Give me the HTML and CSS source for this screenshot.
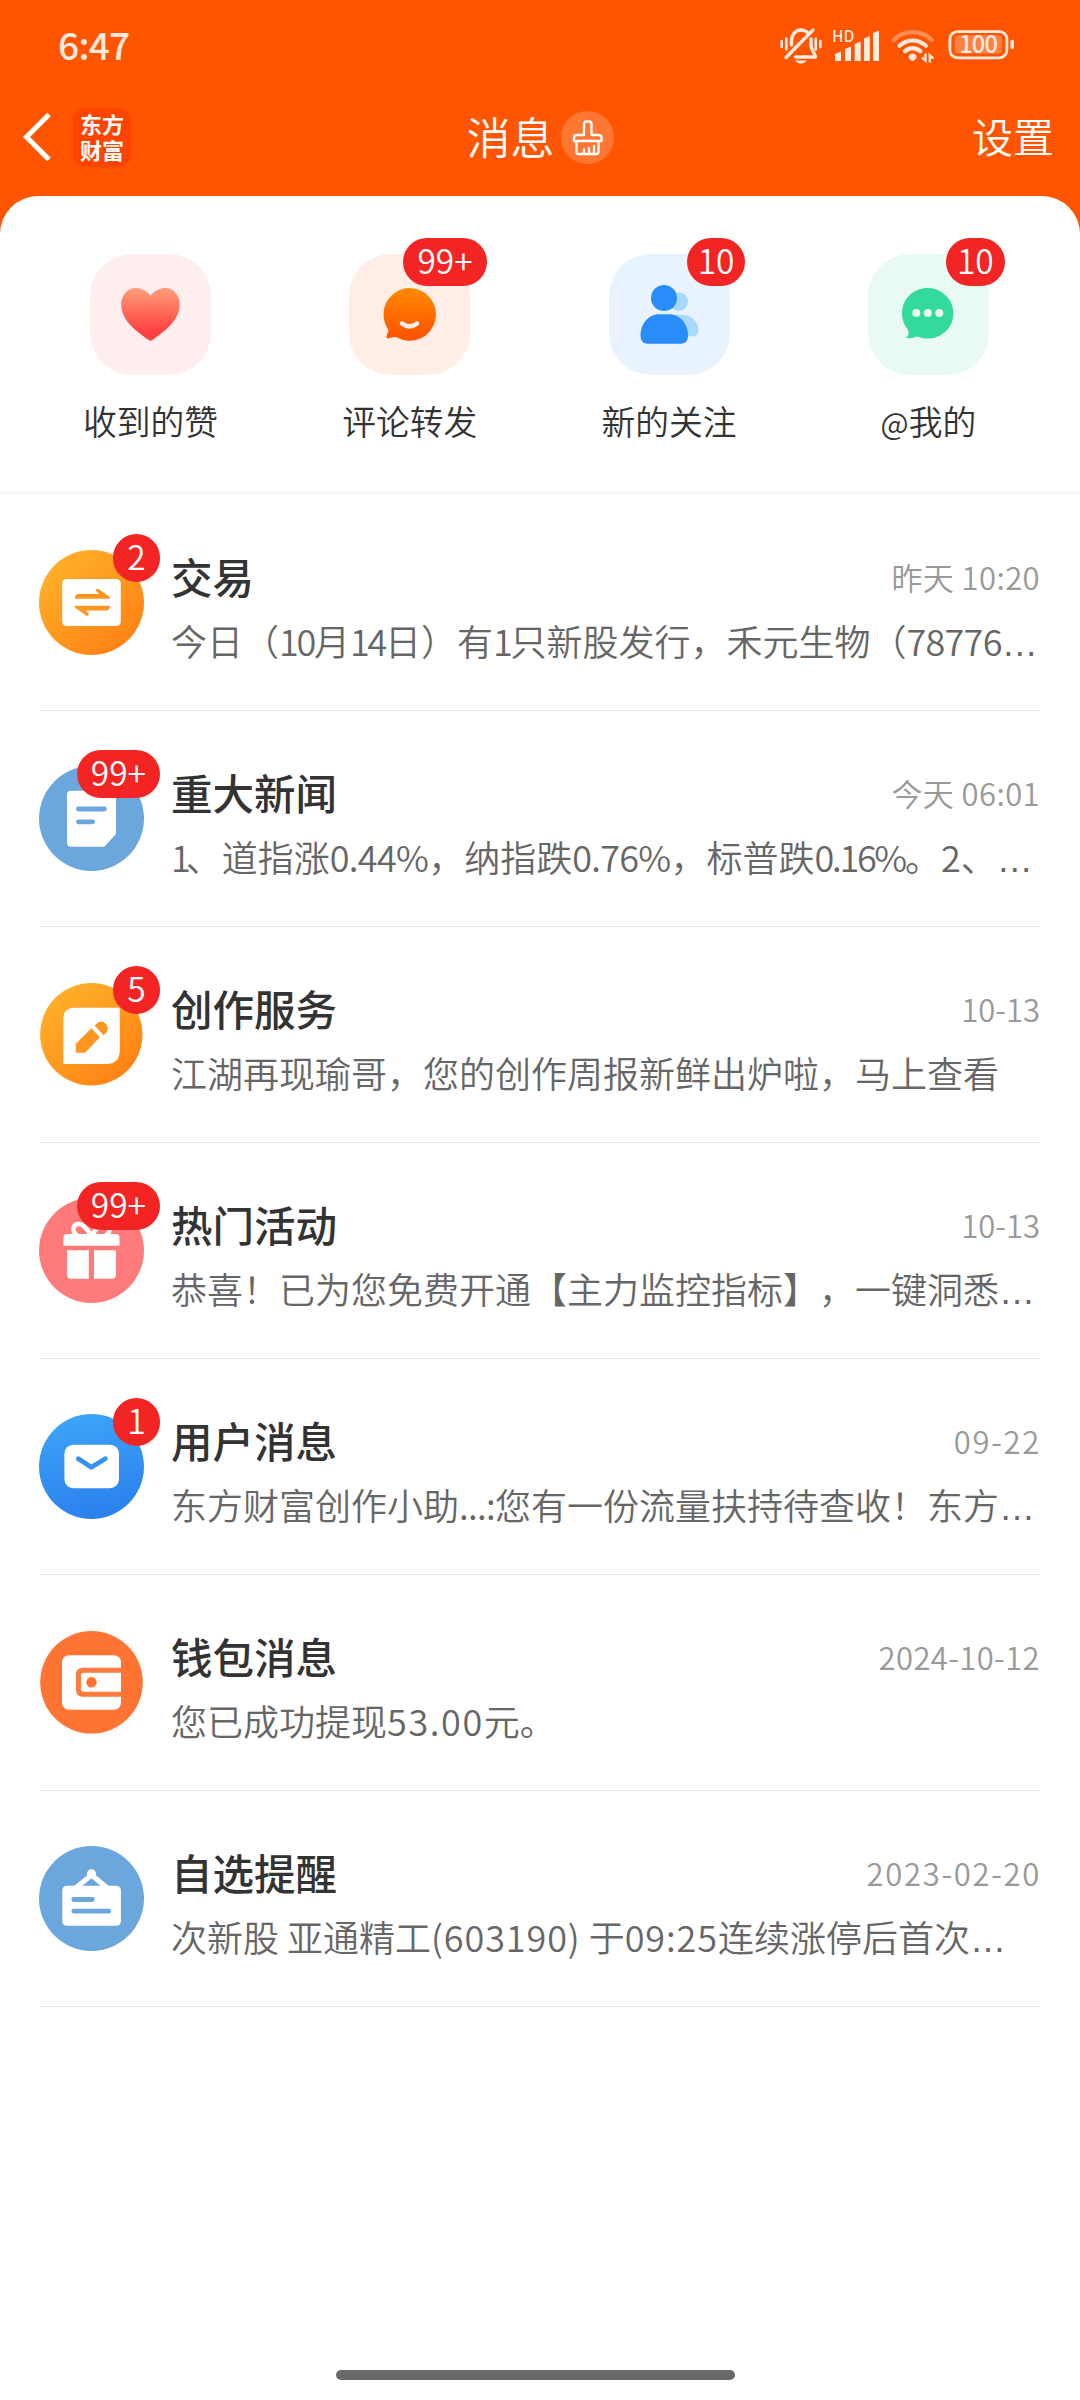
FILE: index.html
```html
<!DOCTYPE html>
<html lang="zh-CN">
<head>
<meta charset="utf-8">
<title>消息</title>
<link rel="stylesheet" href="styles.css">
</head>
<body>
<div class="phone">
  <header class="top">
    <div class="status">
      <span class="clock">6:47</span>
      <svg class="status-icons" width="240" height="44" viewBox="776 24 240 44" fill="none">
        <g stroke="#ffeadf" stroke-width="3.4" stroke-linecap="round">
          <path d="M781.7 42v6M786.3 39.500v11M820.3 42v6M815.7 39.500v11" stroke-width="2.600"/>
          <path d="M786 58.500L813 31"/>
          <path d="M791.500 46v-4c0-7 4.500-11 9.700-11 2.500 0 4.500.8 6 2.200M811 40v6.500c0 3 2.500 6 4.500 11.500h-20" stroke-linejoin="round"/>
        </g>
        <path d="M795 61.500h11.500c-1 2-3 3-5.700 3s-4.700-1-5.800-3z" fill="#ffeadf"/>
        <text class="hd" x="832" y="42.500">HD</text>
        <g fill="#ffeadf">
          <path d="M835 55l6-2.500V62h-6zM845 50l6-2.500V62h-6zM854.700 45l6-2.500V62h-6zM864 39.500l5.800-2.500V62H864zM873 34l6-2.500V62h-6z"/>
          <path d="M908.500 57.500a4.300 4.300 0 0 1 8.200 0c0 2-2.600 4.300-4.100 4.300s-4.100-2.300-4.100-4.300z"/>
        </g>
        <g stroke="#ffeadf" stroke-width="4.200" stroke-linecap="round">
          <path d="M893.700 41a27 27 0 0 1 38 0" opacity=".38"/>
          <path d="M899.500 46.800a19 19 0 0 1 26.300 0"/>
          <path d="M905 52.300a11 11 0 0 1 15.300 0"/>
        </g>
        <path d="M925.500 54.500v7.200l-3.500-3M929.800 63.500v-7.200l3.500 3" stroke="#ffeadf" stroke-width="2.300"/>
        <rect x="949.900" y="32.600" width="57" height="26.200" rx="7.500" stroke="#ffeadf" stroke-width="2.800"/>
        <rect x="954.600" y="36.300" width="47.200" height="18.200" rx="3" fill="#fff" opacity=".26"/>
        <rect x="1010.400" y="40.700" width="3.500" height="9.600" rx="1.700" fill="#ffeadf"/>
        <text class="charge" x="978.200" y="54" text-anchor="middle">100</text>
      </svg>
    </div>
    <nav class="nav">
      <div class="nav-left">
        <svg width="28" height="50" viewBox="0 0 28 50" fill="none" stroke="#fff" stroke-width="5"><path d="M26 2.500L3.500 25 26 47.500"/></svg>
        <div class="logo">东方<br>财富</div>
      </div>
      <div class="nav-title">
        <h1>消息</h1>
        <div class="brush">
          <svg width="53" height="53" viewBox="0 0 53 53" fill="none" stroke="#fff" stroke-width="2.300" stroke-linejoin="round" stroke-linecap="round">
            <path d="M23 24V13q0-2.500 2.500-2.500h2.500q2.500 0 2.500 2.500v11h7q3 0 3 3v3H13v-3q0-3 3-3zM15.500 30v11q0 2 2 2h18q2 0 2-2V30M23 42v-3.500M28 42v-5M33 42v-7"/>
          </svg>
        </div>
      </div>
      <span class="nav-right">设置</span>
    </nav>
  </header>

  <main class="sheet">
    <section class="shortcuts">
      <div class="shortcut">
        <div class="tile tile-like">
          <svg width="121" height="121" viewBox="0 0 121 121">
            <defs><linearGradient id="heart" x1="0" y1="0" x2="0" y2="1"><stop offset="0" stop-color="#ff9d7a"/><stop offset=".82" stop-color="#ff4141"/></linearGradient></defs>
            <path d="M60.500 42C65 35 72 34 75 34c9 0 14.700 7.500 14.700 16.500C89.700 67 74 77.500 62.300 86q-1.800 1.300-3.600 0C47 77.500 31.200 67 31.200 50.500 31.200 41.500 37 34 46 34c3 0 10 1 14.500 8z" fill="url(#heart)"/>
          </svg>
        </div>
        <span class="shortcut-name">收到的赞</span>
      </div>
      <div class="shortcut">
        <div class="tile tile-comment">
          <svg width="121" height="121" viewBox="0 0 121 121">
            <defs><linearGradient id="bubble" x1="0" y1="0" x2="0" y2="1"><stop offset="0" stop-color="#ff8a00"/><stop offset=".9" stop-color="#ff5500"/></linearGradient></defs>
            <path d="M60.500 34a26.400 26.400 0 1 1-12.500 49.600c-1-.5-2-.8-3-.6l-5.500 1.300c-1.500.4-2.500-.6-2-2l1.700-4.800c.3-1 .1-1.800-.3-2.600A26.400 26.400 0 0 1 60.500 34z" fill="url(#bubble)"/>
            <path d="M53 69.500q7.500 5.800 15 0" fill="none" stroke="#ffeee6" stroke-width="4.600" stroke-linecap="round"/>
          </svg>
          <span class="badge">99+</span>
        </div>
        <span class="shortcut-name">评论转发</span>
      </div>
      <div class="shortcut">
        <div class="tile tile-follow">
          <svg width="121" height="121" viewBox="0 0 121 121">
            <g fill="#a9d8ff"><circle cx="69.700" cy="47.700" r="9.300"/><path d="M65 60.700h8c9 0 16.400 7 16.400 15.300 0 4-2 6.300-5.500 6.300H65z"/></g>
            <circle cx="55" cy="44" r="13" fill="#288cf9"/>
            <path d="M50 60.300h10.500C71 60.300 79 70 79 81.500c0 5-2.700 8.200-7 8.200H38.500c-4.300 0-7-3.200-7-8.200 0-11.500 8-21.200 18.500-21.200z" fill="#288cf9"/>
          </svg>
          <span class="badge">10</span>
        </div>
        <span class="shortcut-name">新的关注</span>
      </div>
      <div class="shortcut">
        <div class="tile tile-mention">
          <svg width="121" height="121" viewBox="0 0 121 121">
            <path d="M60 34a25.300 25.300 0 1 1-9.500 48.700q-1.500-.6-3 0c-2.500 1.300-6 1.700-8.500 1.400-1-.2-1-.9-.3-1.300 2.300-1.300 2.600-5 .6-8A25.300 25.300 0 0 1 60 34z" fill="#34da9c"/>
            <g fill="#e8faf3"><circle cx="48.300" cy="59" r="4"/><circle cx="59.800" cy="59" r="4"/><circle cx="71.300" cy="59" r="4"/></g>
          </svg>
          <span class="badge">10</span>
        </div>
        <span class="shortcut-name"><span class="at">@</span>我的</span>
      </div>
    </section>

    <section class="list">
      <article class="row">
        <div class="avatar">
          <svg width="105" height="105" viewBox="0 0 105 105">
            <defs><linearGradient id="amber" x1=".15" y1=".1" x2=".85" y2=".9"><stop offset="0" stop-color="#ffb02a"/><stop offset="1" stop-color="#ff8214"/></linearGradient></defs>
            <circle cx="52.500" cy="52.500" r="52.500" fill="url(#amber)"/>
            <rect x="23.200" y="29" width="58.600" height="47" rx="4.500" fill="#fff"/>
            <path d="M39.500 44h20.700l-2.700-2.600c-1.500-1.600 0-3.300 2-2.500 1 .4 1.700 1 2.500 1.900l8.500 6q1.500 1.900-.5 1.900H35.700q0-4.700 3.800-4.700zM67.200 60.500H46.500l2.700 2.600c1.500 1.600 0 3.300-2 2.500-1-.4-1.700-1-2.500-1.900l-8.500-6q-1.500-1.900.5-1.900H71q0 4.700-3.800 4.700z" fill="#ff961f"/>
          </svg>
          <span class="badge">2</span>
        </div>
        <div class="body">
          <div class="line"><h2>交易</h2><time class="mid">昨天 10:20</time></div>
          <p>今日（<span class="tight">10</span>月<span class="tight">14</span>日）有<span class="tight">1</span>只新股发行，禾元生物（<span class="snug">78776</span><span class="dots">…</span></p>
        </div>
      </article>
      <article class="row">
        <div class="avatar">
          <svg width="105" height="105" viewBox="0 0 105 105">
            <circle cx="52.500" cy="52.500" r="52.500" fill="#6ba6dc"/>
            <path d="M32 24.700h45V68L65.300 80.700H32q-4 0-4-4v-48q0-4 4-4z" fill="#fff"/>
            <path d="M39.400 43h26M39.400 55.800h14.200" stroke="#6ba6dc" stroke-width="4.800" stroke-linecap="round"/>
          </svg>
          <span class="badge">99+</span>
        </div>
        <div class="body">
          <div class="line"><h2>重大新闻</h2><time class="mid">今天 06:01</time></div>
          <p><span class="tighter">1</span>、道指涨<span class="snug">0.44%</span>，纳指跌<span class="snug">0.76%</span>，标普跌<span class="tight">0.16%</span>。2、<span class="dots">…</span></p>
        </div>
      </article>
      <article class="row">
        <div class="avatar">
          <svg width="105" height="105" viewBox="0 0 105 105">
            <circle cx="52.300" cy="52.300" r="51.200" fill="url(#amber)"/>
            <path d="M35.400 25.700h45.400V68q0 14-14 14H24.400V36.700q0-11 11-11z" fill="#fff"/>
            <path d="M36.800 61.800L52.500 46.300l8.400 9L46 70.700h-9.200zM55.800 43.500l2.300-2.300c6-4.500 14 3 9.400 9.300l-3 2.700z" fill="#ff961f"/>
          </svg>
          <span class="badge">5</span>
        </div>
        <div class="body">
          <div class="line"><h2>创作服务</h2><time>10-13</time></div>
          <p>江湖再现瑜哥，您的创作周报新鲜出炉啦，马上查看</p>
        </div>
      </article>
      <article class="row">
        <div class="avatar">
          <svg width="105" height="105" viewBox="0 0 105 105">
            <circle cx="52.500" cy="52.500" r="52.500" fill="#ff7b7b"/>
            <path d="M28.500 36h48q4 0 4 4v7.700H24.400V40q0-4 4.100-4zM28.100 52.300h21.700v28.400H32q-3.900 0-3.900-3.900zM55 52.300h22v24.500q0 3.900-3.900 3.900H55z" fill="#fff"/>
            <path d="M39 38c-6-4-6-11 0-12s10 7 13.500 11.500C56 33 60 25 66 26s6 8 0 12" fill="none" stroke="#fff" stroke-width="4.500"/>
          </svg>
          <span class="badge">99+</span>
        </div>
        <div class="body">
          <div class="line"><h2>热门活动</h2><time>10-13</time></div>
          <p>恭喜！已为您免费开通【主力监控指标】，一键洞悉<span class="dots">…</span></p>
        </div>
      </article>
      <article class="row">
        <div class="avatar">
          <svg width="105" height="105" viewBox="0 0 105 105">
            <defs><linearGradient id="sky" x1=".4" y1="0" x2=".6" y2="1"><stop offset="0" stop-color="#3ba4f8"/><stop offset="1" stop-color="#2c7fec"/></linearGradient></defs>
            <circle cx="52.500" cy="52.500" r="52.500" fill="url(#sky)"/>
            <rect x="25.400" y="30.700" width="54.600" height="43.500" rx="9" fill="#fff"/>
            <path d="M39.300 44.800l13 8.500 14-8.500" fill="none" stroke="#3591f2" stroke-width="4.800" stroke-linecap="round" stroke-linejoin="round"/>
          </svg>
          <span class="badge">1</span>
        </div>
        <div class="body">
          <div class="line"><h2>用户消息</h2><time class="wide">09-22</time></div>
          <p>东方财富创作小助<span class="snug">...:</span>您有一份流量扶持待查收！东方<span class="dots">…</span></p>
        </div>
      </article>
      <article class="row">
        <div class="avatar">
          <svg width="105" height="105" viewBox="0 0 105 105">
            <circle cx="52.500" cy="52.300" r="51.300" fill="#ff7433"/>
            <rect x="23" y="25.300" width="59" height="54.400" rx="7" fill="#fff"/>
            <path d="M82.500 40.300H44q-4.500 0-4.500 4.500v15q0 4.500 4.500 4.500h38.500" fill="none" stroke="#ff7a3d" stroke-width="5"/>
            <circle cx="52.500" cy="52.300" r="5.200" fill="#ff7433"/>
          </svg>
        </div>
        <div class="body">
          <div class="line"><h2>钱包消息</h2><time class="mid">2024-10-12</time></div>
          <p>您已成功提现<span class="loose">53.00</span>元。</p>
        </div>
      </article>
      <article class="row">
        <div class="avatar">
          <svg width="105" height="105" viewBox="0 0 105 105">
            <circle cx="52.500" cy="52.500" r="52.500" fill="#6ba6dc"/>
            <rect x="23.300" y="39.700" width="58.600" height="40" rx="4.500" fill="#fff"/>
            <path d="M36 42.500L52.500 29 69 42.500" fill="none" stroke="#fff" stroke-width="5"/>
            <circle cx="52.500" cy="28" r="4.700" fill="#fff"/>
            <path d="M34.800 53.500h18.500M34.800 65.200h35" stroke="#6ba6dc" stroke-width="4.800" stroke-linecap="round"/>
          </svg>
        </div>
        <div class="body">
          <div class="line"><h2>自选提醒</h2><time class="wide">2023-02-20</time></div>
          <p>次新股 亚通精工<span class="airy">(603190)</span> 于<span class="airy">09:25</span>连续涨停后首次<span class="dots">…</span></p>
        </div>
      </article>
    </section>
    <div class="home-bar"></div>
  </main>
</div>
</body>
</html>
```
FILE: styles.css
```css
* { box-sizing: border-box; margin: 0; padding: 0; }
body {
  background: #ff5500;
  font-family: "Noto Sans CJK SC", sans-serif;
  font-weight: 350;
  color: #333;
  text-spacing-trim: space-all;
}
svg { display: block; }
.phone { width: 1080px; height: 2400px; display: flex; flex-direction: column; overflow: hidden; }

.top { height: 196px; color: #fff; }
.status {
  height: 90px;
  padding: 0 64px 0 58px;
  display: flex;
  align-items: center;
  justify-content: space-between;
}
.clock { font-size: 37px; font-weight: 500; letter-spacing: -0.7px; line-height: 1; padding-bottom: 2px; color: #ffeadf; }
.hd { font: 500 15.500px "Noto Sans CJK SC", sans-serif; fill: #ffeadf; }
.charge { font: 500 23.500px "Noto Sans CJK SC", sans-serif; letter-spacing: -0.7px; fill: #ffeadf; }

.nav {
  height: 94px;
  padding: 0 26px 0 23px;
  display: grid;
  grid-template-columns: 1fr auto 1fr;
  align-items: center;
}
.nav-left { display: flex; align-items: center; gap: 22px; }
.logo {
  width: 58px;
  height: 59px;
  padding-top: 2px;
  border-radius: 12px;
  background: #ff4400;
  text-align: center;
  font-size: 22px;
  font-weight: 700;
  line-height: 26px;
}
.nav-title { display: flex; align-items: center; gap: 6px; padding-left: 3px; }
.nav-title h1 { font-size: 44px; font-weight: 350; line-height: 60px; padding-bottom: 3px; }
.brush { width: 53px; height: 53px; border-radius: 50%; background: #ff7733; }
.nav-right { justify-self: end; font-size: 41px; line-height: 60px; padding-bottom: 4px; }

.sheet {
  flex: 1;
  background: #fff;
  border-radius: 38px 38px 0 0;
  display: flex;
  flex-direction: column;
}
.shortcuts {
  height: 299px;
  padding: 58px 22px 0 21px;
  border-bottom: 3px solid #f6f7f9;
  display: grid;
  grid-template-columns: repeat(4, 1fr);
}
.shortcut { display: flex; flex-direction: column; align-items: center; gap: 21px; }
.tile { position: relative; width: 121px; height: 121px; border-radius: 42px; }
.tile-like { background: #ffeeee; }
.tile-comment { background: #ffeee6; }
.tile-follow { background: #e8f3ff; }
.tile-mention { background: #e8faf3; }
.shortcut-name { font-size: 33.750px; line-height: 50px; }
.at { font-size: 30px; }

.badge {
  position: absolute;
  top: -16px;
  right: -16px;
  min-width: 47px;
  height: 48px;
  padding: 0 14px;
  border-radius: 24px;
  background: #f22424;
  color: #fff;
  font-size: 33.500px;
  line-height: 44px;
  text-align: center;
  white-space: nowrap;
}
.tile .badge { right: auto; left: 54px; }
.tile-follow .badge, .tile-mention .badge { left: 78px; padding: 0 11px; }

.list { padding: 0 40px 0 39px; }
.row {
  height: 216px;
  border-bottom: 1px solid #e6e6e6;
  display: flex;
  align-items: flex-start;
  gap: 27px;
  padding-top: 55px;
}
.avatar { position: relative; width: 105px; height: 105px; flex: none; }
.body { flex: 1; min-width: 0; margin-top: -2px; }
.line { display: flex; justify-content: space-between; align-items: center; height: 56px; }
h2 { font-size: 41.500px; font-weight: 500; line-height: 56px; }
time { font-size: 31px; line-height: 56px; padding-top: 2px; color: #999; }
.body p { margin-top: 10px; font-size: 36px; line-height: 52px; color: #666; white-space: nowrap; }

/* Letter-spacing steps for runs of digits */
.mid { letter-spacing: 0.400px; }
.wide { letter-spacing: 1.700px; margin-right: -1px; }
.tighter { letter-spacing: -5px; }
.tight { letter-spacing: -2.300px; }
.snug { letter-spacing: -0.700px; }
.airy { letter-spacing: 0.900px; }
.loose { letter-spacing: 1.600px; }
.dots { font-family: "Liberation Sans", sans-serif; }

.home-bar { width: 399px; height: 10px; margin: auto 0 20px 336px; border-radius: 5px; background: #696969; }
```
